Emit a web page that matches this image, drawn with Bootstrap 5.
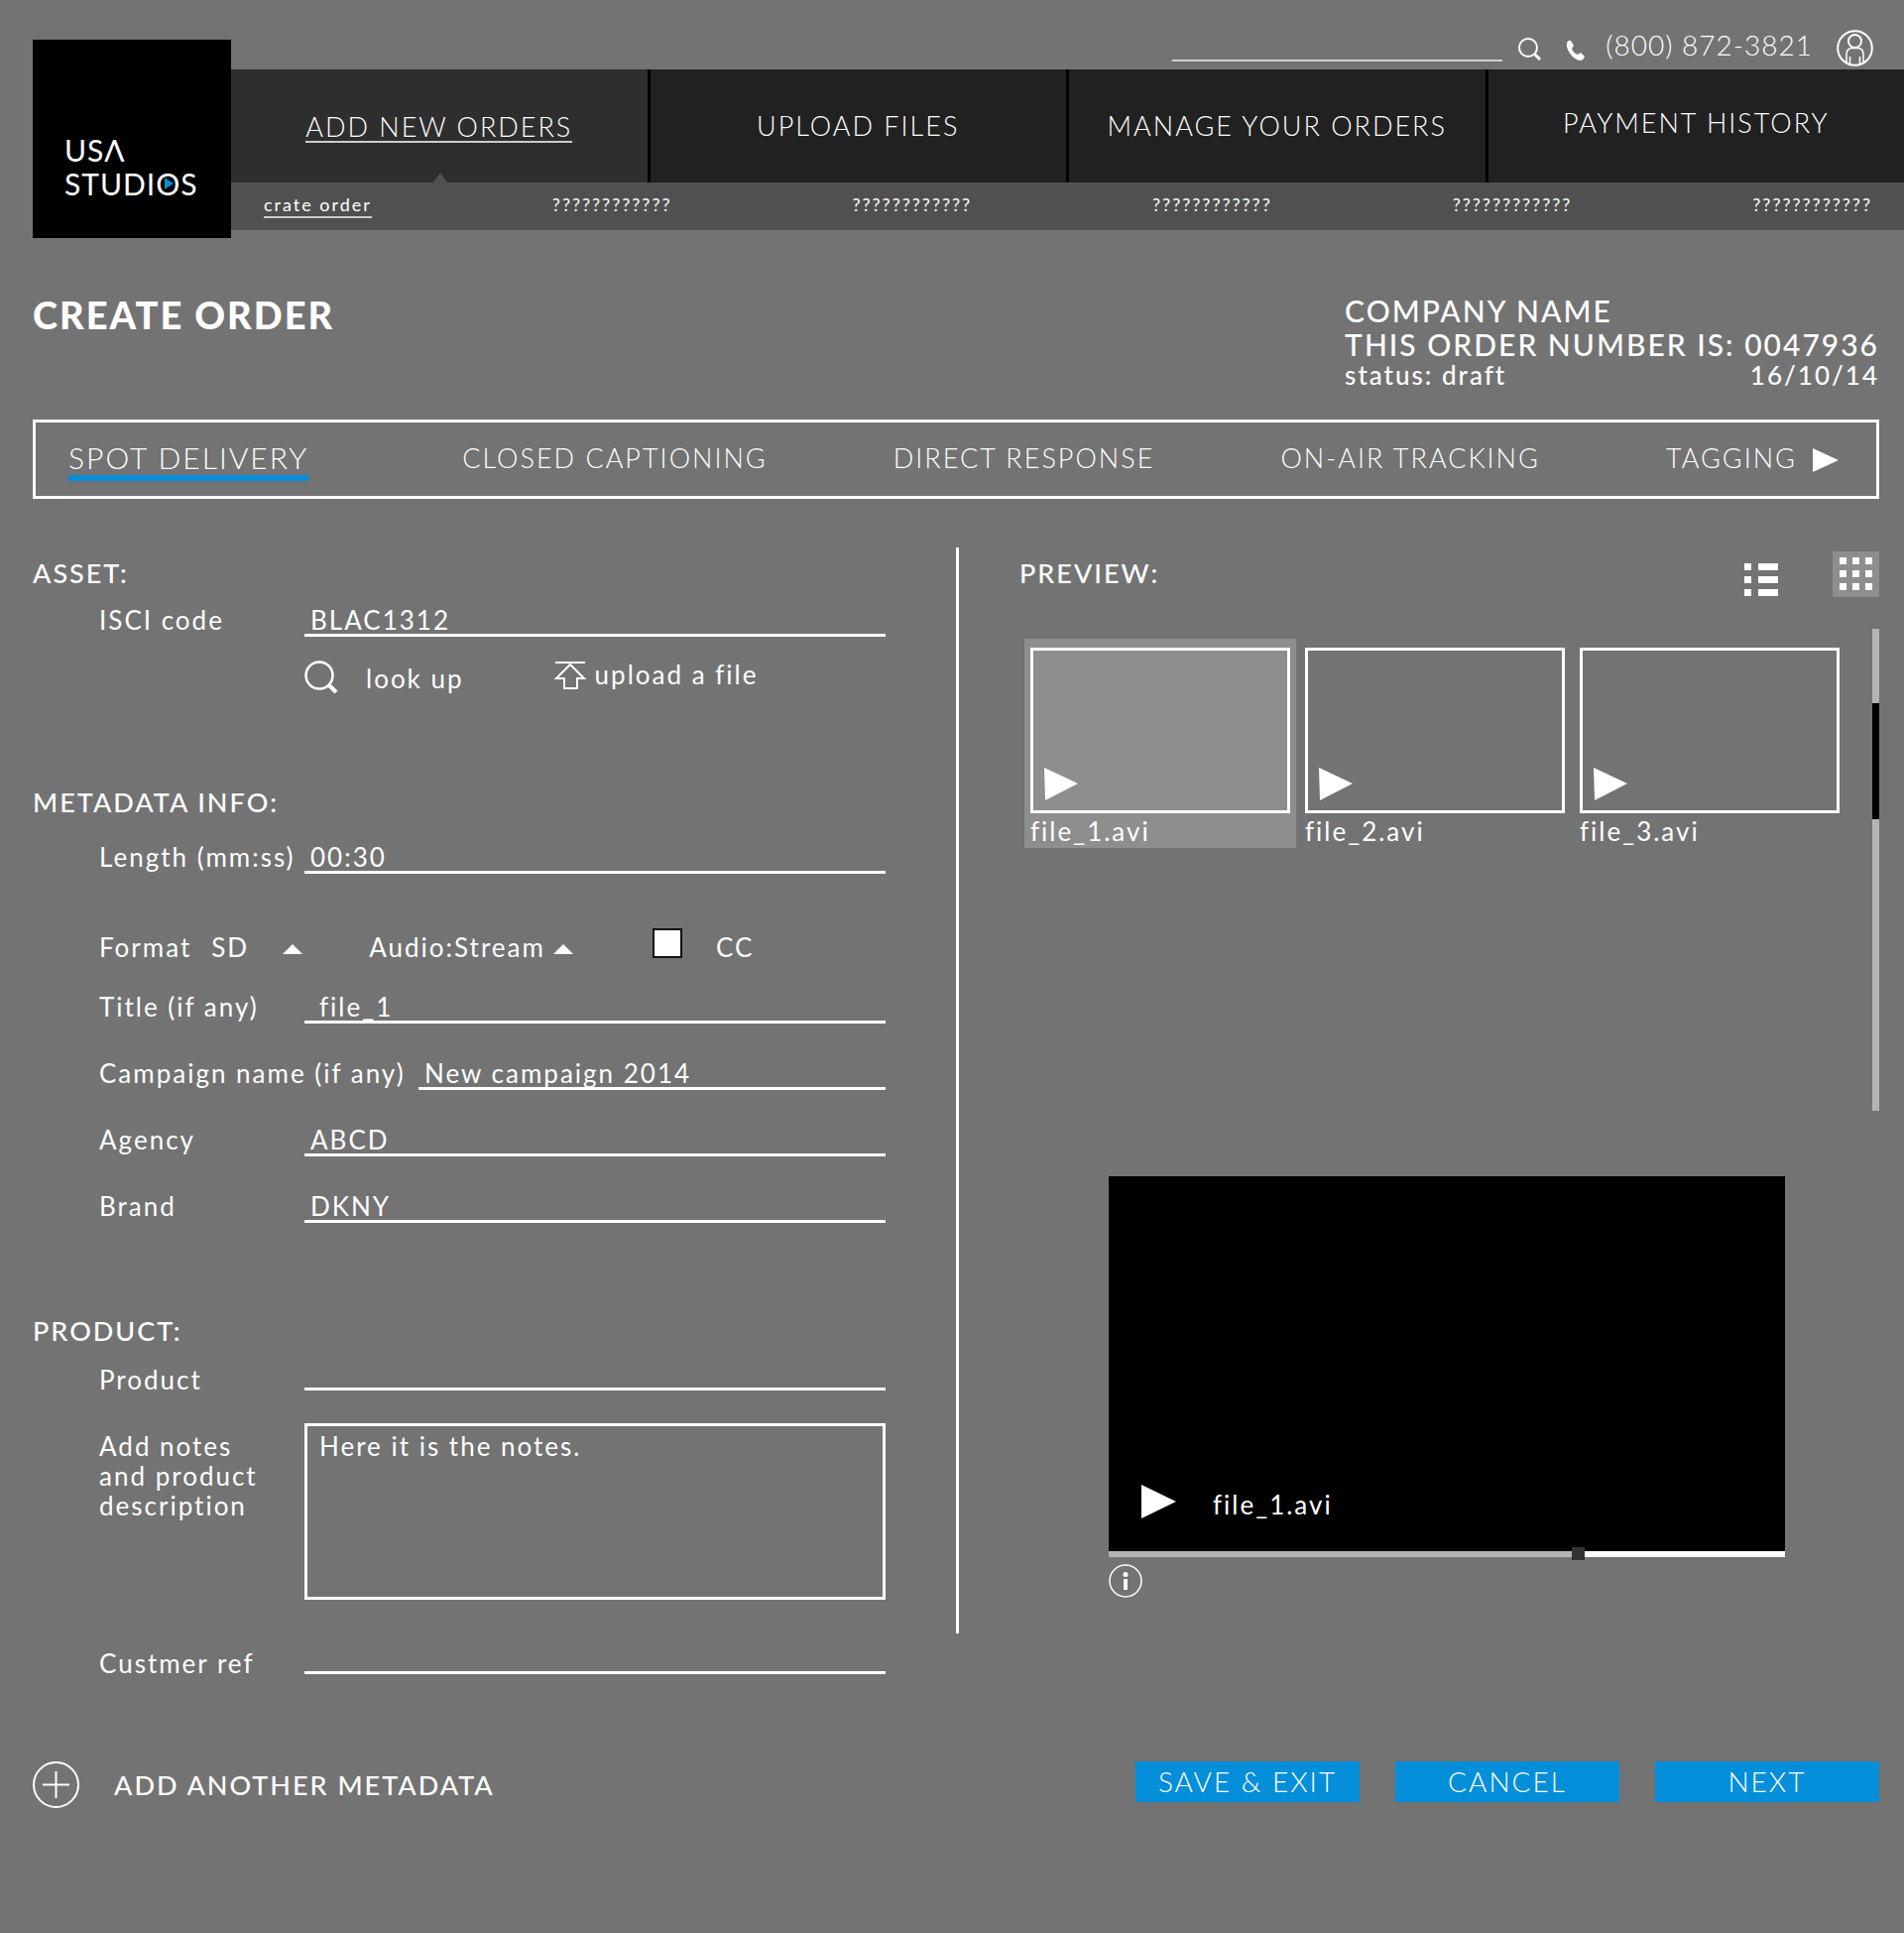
<!DOCTYPE html>
<html lang="en">
<head>
<meta charset="utf-8">
<meta name="viewport" content="width=device-width, initial-scale=1">
<title>USA Studios – Create order</title>
<link href="https://cdn.jsdelivr.net/npm/bootstrap@5.3.0/dist/css/bootstrap.min.css" rel="stylesheet">
<style>
  body { background: #737373; color: #fff; font: 400 26px/28px Lato, sans-serif; letter-spacing: 2px; }
  a, a:hover { color: #fff; text-decoration: none; }
  svg { display: block; flex: none; fill: none; stroke: #fff; stroke-width: 2; }
  svg.solid { fill: #fff; stroke: none; }
  button, input, select, textarea { font: inherit; letter-spacing: inherit; color: inherit; }
  .plain-btn { background: none; border: 0; padding: 0; display: flex; color: #fff; letter-spacing: 2px; }

  /* header */
  .brand-box { width: 200px; height: 200px; margin: 40px 0 0 33px; padding: 94px 0 0 32px; background: #000; flex: none; font-size: 30px; line-height: 34px; letter-spacing: 1px; }
  .brand-o { position: relative; display: inline-block; }
  .brand-o svg { position: absolute; left: 9px; top: 11px; fill: #058ed9; stroke: none; }
  .top-bar { height: 70px; padding: 30px 31px 0 0; font-weight: 300; font-size: 28px; line-height: 30px; letter-spacing: 1px; }
  .search-line { width: 333px; height: 32px; background: none; border: 0; border-bottom: 2px solid #d0d0d0; outline: 0; }
  .main-nav { height: 114px; background: #212121; font-weight: 300; font-size: 27px; }
  .main-nav > a { flex: 1 1 0; border-right: 3px solid #000; position: relative; display: flex; align-items: end; justify-content: center; padding-bottom: 43px; }
  .main-nav > a:last-child { border-right: 0; padding-bottom: 46px; }
  .main-nav > a.current { background: #2e2e2e; padding-bottom: 40px; }
  .main-nav > a.current span { border-bottom: 2px solid #ccc; }
  .main-nav > a.current svg { position: absolute; left: 204px; bottom: 0; fill: #505050; stroke: none; }
  .sub-nav { height: 48px; background: #505050; padding: 10px 32px 0 33px; font-size: 18px; line-height: 24px; }
  .sub-nav .current { border-bottom: 2px solid #ccc; }

  /* page heading and service tabs */
  .page-area { padding: 0 25px 0 33px; }
  .page-title { font-weight: 900; font-size: 38px; line-height: 42px; margin: 0; }
  .order-info { font-size: 30px; line-height: 34px; font-weight: 500; }
  .order-info .order-sub { font-size: 26px; line-height: 28px; }
  .service-tabs { border: 3px solid #fff; height: 80px; padding: 22px 38px 0 33px; margin-top: 31px; font-weight: 300; font-size: 27px; }
  .service-tabs .current { font-size: 30px; border-bottom: 6px solid #058ed9; height: 37px; line-height: 27px; margin-right: 28px; }
  .tab-arrow { margin: 4px 0 0 16px; }

  /* form column */
  .work-area { margin-top: 49px; }
  .block-title { font-size: 27px; line-height: 28px; font-weight: 500; margin: 0; }
  .asset-title { margin-bottom: 19px; }
  .meta-title { margin: 95px 0 27px; }
  .product-title { margin: 95px 0 15px; }
  .col-form { flex: 0 0 50%; padding: 12px 71px 0 0; }
  .field-row { display: flex; padding-left: 67px; }
  .field-row > label { width: 207px; flex: none; white-space: nowrap; }
  .field-row > label.wide { width: 322px; }
  .field-row > label.low { line-height: 22px; align-self: end; }
  .pitch { margin-bottom: 36px; }
  .line-input { flex: 1 1 0; min-width: 0; height: 31px; line-height: 28px; padding: 0 0 0 6px; background: none; border: 0; border-bottom: 3px solid #fff; border-radius: 0; outline: 0; }
  .line-input.indent { padding-left: 15px; }
  .notes-row { margin: 33px 0 44px; }
  .notes-row > label { padding-top: 8px; line-height: 30px; }
  .notes-box { flex: 1 1 0; min-width: 0; height: 178px; background: none; border: 3px solid #fff; padding: 5px 12px; line-height: 30px; resize: none; outline: 0; }
  .asset-links { margin-top: 24px; padding-left: 274px; }
  .upload-btn { margin-left: 90px; align-items: start; }
  .format-row { height: 33px; margin: 55px 0 32px; padding-left: 67px; }
  .format-label { margin-right: 20px; }
  .bare-select { appearance: none; background: none; border: 0; padding: 0; line-height: 28px; height: 28px; outline: 0; }
  .arrow-a { margin: 0 67px 7px 34px; }
  .arrow-b { margin: 0 80px 7px 8px; }
  .cc-box { appearance: none; width: 30px; height: 30px; background: #fff; border: 2px solid #111; margin: 0; align-self: start; }
  .cc-label { margin-left: 34px; }

  /* preview column */
  .col-preview { flex: 1 1 0; border-left: 3px solid #fff; padding: 4px 0 36px 61px; }
  .preview-title { padding-top: 8px; }
  .list-btn { padding-top: 12px; margin-right: 55px; }
  .view-on { background: #8e8e8e; width: 47px; height: 46px; padding: 6px 7px; }
  .gallery { margin: 32px 0 0 5px; }
  .file-list { display: flex; gap: 3px; flex: 1 1 0; padding-top: 10px; }
  .file-item { flex: 1 1 0; height: 211px; padding: 9px 6px 0; }
  .file-item.current { background: #8e8e8e; }
  .file-frame { height: 167px; border: 3px solid #fff; padding: 118px 0 0 11px; margin-bottom: 4px; }
  .scroll-rail { width: 7px; height: 486px; background: #b4b4b4; margin-left: 27px; padding-top: 75px; }
  .scroll-thumb { height: 117px; background: #000; }
  .player { margin: 66px 95px 0 90px; }
  .player-screen { height: 378px; background: #000; padding: 0 0 33px 33px; gap: 37px; }
  .player-rail { height: 6px; background: #fff; }
  .player-done { height: 6px; background: #b4b4b4; position: relative; }
  .player-knob { position: absolute; right: -6px; top: -4px; width: 13px; height: 13px; background: #333; }
  .info-btn { margin-top: 7px; }

  /* bottom actions */
  .page-actions { margin-top: 88px; padding-bottom: 125px; }
  .add-text { margin-left: 35px; font-size: 27px; font-weight: 500; }
  .act-group { gap: 36px; }
  .act-btn, .act-btn:hover { width: 226px; height: 41px; padding: 0; border: 0; border-radius: 0; background: #058ed9; color: #fff; font-size: 28px; font-weight: 300; line-height: 41px; letter-spacing: 2px; }
</style>
</head>
<body>
<header class="d-flex">
  <a href="#" class="brand-box">USΛ<br>STUDI<span class="brand-o">O<svg width="9" height="12" viewBox="0 0 9 12"><path d="M0 0L9 6L0 12z"/></svg></span>S</a>
  <div class="flex-grow-1">
    <div class="top-bar d-flex justify-content-end">
      <input class="search-line" type="search" aria-label="Search">
      <button class="plain-btn ms-3 pt-1" aria-label="Run search"><svg class="mt-1" width="24" height="24" viewBox="0 0 24 24"><circle cx="10" cy="10" r="9"/><path d="M16.500 16.500L22 22" stroke-width="3"/></svg></button>
      <svg class="solid mt-2 ms-4" width="20" height="24" viewBox="0 0 20 24"><path d="M1 5Q3 2 5 3L8 8L6 11Q8 16 12 17L15 15L19 19Q18 22 15 23Q10 23 5 17Q0 11 1 5z"/></svg>
      <a href="tel:8008723821" class="ms-3 ps-1">(800) 872-3821</a>
      <a href="#" class="ms-4" aria-label="Account"><svg width="37" height="37" viewBox="0 0 37 37"><circle cx="18.500" cy="18.500" r="17.300"/><circle cx="18.500" cy="11.500" r="6.500"/><path d="M10 33V25Q10 18.500 16 18.500H21Q27 18.500 27 25V33M13.500 35V27M23.500 35V27" stroke-width="1.500"/></svg></a>
    </div>
    <nav class="main-nav d-flex">
      <a href="#" class="current"><span>ADD NEW ORDERS</span><svg width="14" height="10" viewBox="0 0 14 10"><path d="M0 10L7 0L14 10z"/></svg></a>
      <a href="#">UPLOAD FILES</a>
      <a href="#">MANAGE YOUR ORDERS</a>
      <a href="#">PAYMENT HISTORY</a>
    </nav>
    <nav class="sub-nav d-flex justify-content-between align-items-start">
      <a href="#" class="current">crate order</a>
      <a href="#">????????????</a>
      <a href="#">????????????</a>
      <a href="#">????????????</a>
      <a href="#">????????????</a>
      <a href="#">????????????</a>
    </nav>
  </div>
</header>

<main class="page-area">
  <div class="d-flex justify-content-between pt-5">
    <h1 class="page-title pt-2">CREATE ORDER</h1>
    <div class="order-info pt-2">
      <div>COMPANY NAME</div>
      <div>THIS ORDER NUMBER IS: 0047936</div>
      <div class="order-sub d-flex justify-content-between"><span>status: draft</span><span>16/10/14</span></div>
    </div>
  </div>

  <nav class="service-tabs d-flex justify-content-between">
    <a href="#" class="current">SPOT DELIVERY</a>
    <a href="#">CLOSED CAPTIONING</a>
    <a href="#">DIRECT RESPONSE</a>
    <a href="#">ON-AIR TRACKING</a>
    <a href="#" class="d-flex">TAGGING<svg class="solid tab-arrow" width="26" height="24" viewBox="0 0 26 24"><path d="M0 0L26 12L0 24z"/></svg></a>
  </nav>

  <div class="work-area d-flex align-items-start">
    <form class="col-form" id="order-form">
      <h2 class="block-title asset-title">ASSET:</h2>
      <div class="field-row"><label for="isci">ISCI code</label><input id="isci" class="line-input" value="BLAC1312"></div>
      <div class="asset-links d-flex">
        <button type="button" class="plain-btn"><svg width="34" height="34" viewBox="0 0 34 34"><circle cx="15" cy="15" r="13.500" stroke-width="2.500"/><path d="M25 25L32 32" stroke-width="4"/></svg><span class="ms-4 ps-1 pt-1">look up</span></button>
        <button type="button" class="plain-btn upload-btn"><svg width="34" height="30" viewBox="0 0 34 30"><path d="M2 2H32M17 4L31 18H24V28H11V18H3z"/></svg><span class="ms-2">upload a file</span></button>
      </div>

      <h2 class="block-title meta-title">METADATA INFO:</h2>
      <div class="field-row"><label for="len">Length (mm:ss)</label><input id="len" class="line-input" value="00:30"></div>
      <div class="format-row d-flex align-items-end">
        <label for="fmt" class="format-label">Format</label>
        <select id="fmt" class="bare-select"><option>SD</option></select>
        <svg class="solid arrow-a" width="20" height="10" viewBox="0 0 20 10"><path d="M0 10L10 0L20 10z"/></svg>
        <label for="aud">Audio:</label><select id="aud" class="bare-select"><option>Stream</option></select>
        <svg class="solid arrow-b" width="20" height="10" viewBox="0 0 20 10"><path d="M0 10L10 0L20 10z"/></svg>
        <input type="checkbox" id="cc" class="cc-box"><label for="cc" class="cc-label">CC</label>
      </div>
      <div class="field-row pitch"><label for="ttl">Title (if any)</label><input id="ttl" class="line-input indent" value="file_1"></div>
      <div class="field-row pitch"><label for="camp" class="wide">Campaign name (if any)</label><input id="camp" class="line-input" value="New campaign 2014"></div>
      <div class="field-row pitch"><label for="agency">Agency</label><input id="agency" class="line-input" value="ABCD"></div>
      <div class="field-row"><label for="brand">Brand</label><input id="brand" class="line-input" value="DKNY"></div>

      <h2 class="block-title product-title">PRODUCT:</h2>
      <div class="field-row"><label for="prod" class="low">Product</label><input id="prod" class="line-input"></div>
      <div class="field-row notes-row"><label for="notes">Add notes<br>and product<br>description</label><textarea id="notes" class="notes-box">Here it is the notes.</textarea></div>
      <div class="field-row"><label for="cref" class="low">Custmer ref</label><input id="cref" class="line-input"></div>
    </form>

    <section class="col-preview">
      <div class="d-flex align-items-start">
        <h2 class="block-title preview-title me-auto">PREVIEW:</h2>
        <button class="plain-btn list-btn" aria-label="List view"><svg class="solid" width="34" height="33" viewBox="0 0 34 33"><path d="M0 0h7v7H0zM14 0h20v7H14zM0 13h7v7H0zM14 13h20v7H14zM0 26h7v7H0zM14 26h20v7H14z"/></svg></button>
        <button class="plain-btn view-on" aria-label="Grid view"><svg class="solid" width="33" height="33" viewBox="0 0 33 33"><path d="M0 0h7v7H0zM13 0h7v7h-7zM26 0h7v7h-7zM0 13h7v7H0zM13 13h7v7h-7zM26 13h7v7h-7zM0 26h7v7H0zM13 26h7v7h-7zM26 26h7v7h-7z"/></svg></button>
      </div>
      <div class="gallery d-flex">
        <div class="file-list">
          <div class="file-item current"><div class="file-frame"><svg class="solid" width="34" height="33" viewBox="0 0 34 33"><path d="M0 0L34 16L1 33z"/></svg></div>file_1.avi</div>
          <div class="file-item"><div class="file-frame"><svg class="solid" width="34" height="33" viewBox="0 0 34 33"><path d="M0 0L34 16L1 33z"/></svg></div>file_2.avi</div>
          <div class="file-item"><div class="file-frame"><svg class="solid" width="34" height="33" viewBox="0 0 34 33"><path d="M0 0L34 16L1 33z"/></svg></div>file_3.avi</div>
        </div>
        <div class="scroll-rail"><div class="scroll-thumb"></div></div>
      </div>
      <div class="player">
        <div class="player-screen d-flex align-items-end">
          <button class="plain-btn" aria-label="Play"><svg class="solid" width="35" height="34" viewBox="0 0 35 34"><path d="M0 0L35 17L0 34z"/></svg></button>
          <span>file_1.avi</span>
        </div>
        <div class="player-rail"><div class="player-done" style="width:69.500%"><span class="player-knob"></span></div></div>
        <button class="plain-btn info-btn" aria-label="File information"><svg width="34" height="34" viewBox="0 0 34 34"><circle cx="17" cy="17" r="16" stroke-width="1.500"/><circle cx="17" cy="10.500" r="2.500" fill="#fff" stroke="none"/><path d="M17 15V26" stroke-width="4"/></svg></button>
      </div>
    </section>
  </div>

  <div class="page-actions d-flex align-items-start">
    <button class="plain-btn me-auto align-items-center"><svg width="47" height="47" viewBox="0 0 47 47"><circle cx="23.500" cy="23.500" r="22.500"/><path d="M10 23.500H37M23.500 10V37"/></svg><span class="add-text">ADD ANOTHER METADATA</span></button>
    <div class="d-flex act-group">
      <button class="btn act-btn" type="submit" form="order-form">SAVE &amp; EXIT</button>
      <button class="btn act-btn" type="button">CANCEL</button>
      <button class="btn act-btn" type="button">NEXT</button>
    </div>
  </div>
</main>
<script src="https://cdn.jsdelivr.net/npm/bootstrap@5.3.0/dist/js/bootstrap.bundle.min.js"></script>
</body>
</html>
